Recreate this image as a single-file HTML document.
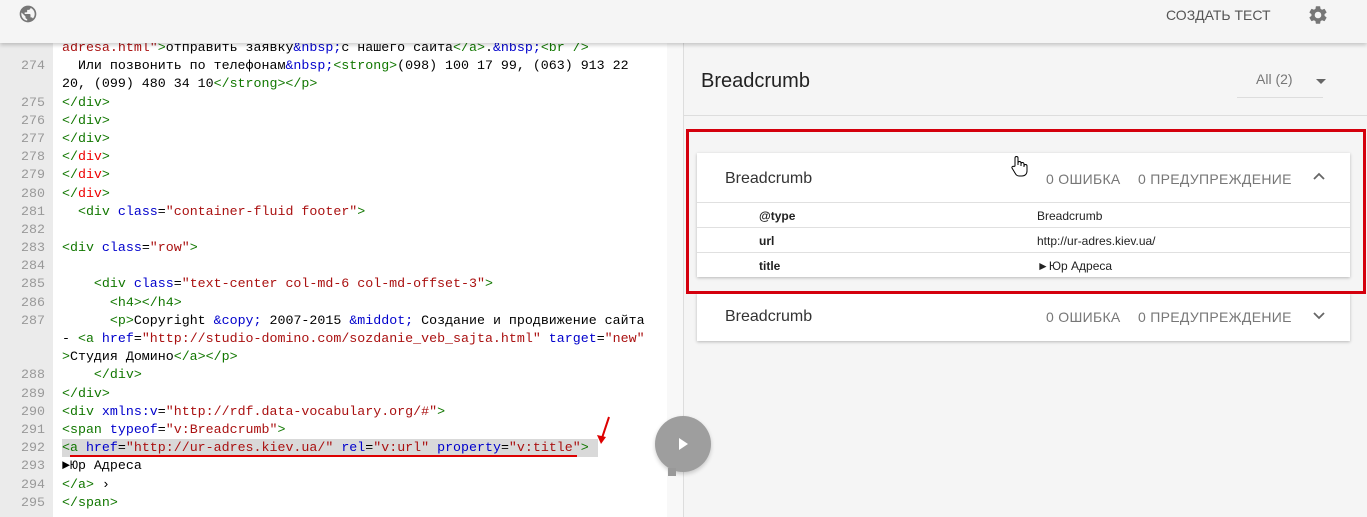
<!DOCTYPE html>
<html><head><meta charset="utf-8"><style>
*{margin:0;padding:0;box-sizing:border-box}
html,body{width:1367px;height:517px;overflow:hidden}
body{background:#f5f5f5;font-family:"Liberation Sans",sans-serif;position:relative}
.hdr{position:absolute;left:0;top:0;width:1367px;height:43px;background:#f5f5f5;box-shadow:0 2px 4px rgba(0,0,0,.2);z-index:5}
.left{position:absolute;left:0;top:43px;width:683px;height:474px;background:#fff;overflow:hidden}
.gut{position:absolute;left:0;top:0;width:53px;height:474px;background:#ebebeb}
.sb{position:absolute;left:667px;top:0;width:16px;height:474px;background:#f8f8f8}
.code{position:absolute;left:0;top:-4px;width:667px;font-family:"Liberation Mono","DejaVu Sans Mono",monospace;font-size:13.3px;line-height:18.2px;color:#000}
.r{height:18.2px;position:relative}
.n{position:absolute;left:0;width:45px;text-align:right;color:#999}
.t{position:absolute;left:62px;white-space:pre}
.g{color:#170}.b{color:#00c}.s{color:#a11}.rd{color:#e00}
.right{position:absolute;left:683px;top:43px;width:684px;height:474px;background:#f5f5f5;border-left:1px solid #ddd}
.card{position:absolute;left:697px;width:653px;background:#fff;box-shadow:0 1px 3px rgba(0,0,0,.25)}
.ch{height:49px;position:relative;font-size:16px;color:#333}
.ch .nm{position:absolute;left:28px;top:17px}
.ch .st{position:absolute;left:349px;top:18px;font-size:14px;color:#777;letter-spacing:.3px}
.ch .st2{position:absolute;left:441px;top:18px;font-size:14px;color:#777;letter-spacing:.3px}
.row{height:25px;border-top:1px solid #e0e0e0;font-size:12px;color:#222;position:relative}
.row .k{position:absolute;left:62px;top:6px;font-weight:bold}
.row .v{position:absolute;left:340px;top:6px}
</style></head><body>
<div class="hdr">
<svg style="position:absolute;left:18px;top:4px" width="20" height="20" viewBox="0 0 24 24"><path fill="#777" d="M12 2C6.48 2 2 6.480 2 12s4.48 10 10 10 10-4.48 10-10S17.52 2 12 2zm-1 17.93c-3.95-.49-7-3.850-7-7.930 0-.62.08-1.21.21-1.79L9 15v1c0 1.1.9 2 2 2v1.93zm6.9-2.54c-.26-.81-1-1.39-1.9-1.39h-1v-3c0-.55-.45-1-1-1H8v-2h2c.55 0 1-.45 1-1V7h2c1.1 0 2-.9 2-2v-.41c2.93 1.19 5 4.06 5 7.41 0 2.08-.8 3.97-2.1 5.39z"/></svg>
<div style="position:absolute;left:1166px;top:7px;font-size:14px;color:#555">СОЗДАТЬ ТЕСТ</div>
<svg style="position:absolute;left:1307px;top:4px" width="22" height="22" viewBox="0 0 24 24"><path fill="#777" d="M19.14 12.94c.04-.3.06-.61.06-.94s-.02-.64-.07-.94l2.03-1.58a.49.49 0 00.12-.61l-1.92-3.32a.49.49 0 00-.59-.22l-2.39.96c-.5-.38-1.03-.7-1.62-.94l-.36-2.54a.48.48 0 00-.48-.41h-3.84c-.24 0-.43.17-.47.41l-.36 2.54c-.59.24-1.130.57-1.62.94l-2.39-.96a.48.48 0 00-.59.22L2.74 8.87c-.12.21-.08.47.12.61l2.03 1.58c-.05.3-.09.63-.09.94s.02.64.07.94l-2.03 1.58a.49.49 0 00-.12.61l1.92 3.32c.12.22.37.29.59.22l2.39-.96c.5.38 1.03.7 1.62.94l.36 2.54c.05.24.24.41.48.41h3.84c.24 0 .44-.17.47-.41l.36-2.54c.59-.24 1.13-.56 1.62-.94l2.39.96c.22.08.47 0 .59-.22l1.92-3.32c.12-.22.07-.47-.12-.61l-2.01-1.58zM12 15.6A3.6 3.6 0 1112 8.4a3.6 3.6 0 010 7.2z"/></svg>
</div>
<div class="left"><div class="gut"></div><div class="sb"></div>
<div class="code"><div class="r"><span class="t"><span class="s">adresa.html"</span><span class="g">&gt;</span>отправить заявку<span class="b">&amp;nbsp;</span>с нашего сайта<span class="g">&lt;/a&gt;</span>.<span class="b">&amp;nbsp;</span><span class="g">&lt;br /&gt;</span></span></div><div class="r"><span class="n">274</span><span class="t">  Или позвонить по телефонам<span class="b">&amp;nbsp;</span><span class="g">&lt;strong&gt;</span>(098) 100 17 99, (063) 913 22</span></div><div class="r"><span class="t">20, (099) 480 34 10<span class="g">&lt;/strong&gt;&lt;/p&gt;</span></span></div><div class="r"><span class="n">275</span><span class="t g">&lt;/div&gt;</span></div><div class="r"><span class="n">276</span><span class="t g">&lt;/div&gt;</span></div><div class="r"><span class="n">277</span><span class="t g">&lt;/div&gt;</span></div><div class="r"><span class="n">278</span><span class="t"><span class="g">&lt;/</span><span class="rd">div</span><span class="g">&gt;</span></span></div><div class="r"><span class="n">279</span><span class="t"><span class="g">&lt;/</span><span class="rd">div</span><span class="g">&gt;</span></span></div><div class="r"><span class="n">280</span><span class="t"><span class="g">&lt;/</span><span class="rd">div</span><span class="g">&gt;</span></span></div><div class="r"><span class="n">281</span><span class="t">  <span class="g">&lt;div</span> <span class="b">class</span>=<span class="s">"container-fluid footer"</span><span class="g">&gt;</span></span></div><div class="r"><span class="n">282</span></div><div class="r"><span class="n">283</span><span class="t"><span class="g">&lt;div</span> <span class="b">class</span>=<span class="s">"row"</span><span class="g">&gt;</span></span></div><div class="r"><span class="n">284</span></div><div class="r"><span class="n">285</span><span class="t">    <span class="g">&lt;div</span> <span class="b">class</span>=<span class="s">"text-center col-md-6 col-md-offset-3"</span><span class="g">&gt;</span></span></div><div class="r"><span class="n">286</span><span class="t g">      &lt;h4&gt;&lt;/h4&gt;</span></div><div class="r"><span class="n">287</span><span class="t">      <span class="g">&lt;p&gt;</span>Copyright <span class="b">&amp;copy;</span> 2007-2015 <span class="b">&amp;middot;</span> Создание и продвижение сайта</span></div><div class="r"><span class="t">- <span class="g">&lt;a</span> <span class="b">href</span>=<span class="s">"http://studio-domino.com/sozdanie_veb_sajta.html"</span> <span class="b">target</span>=<span class="s">"new"</span></span></div><div class="r"><span class="t"><span class="g">&gt;</span>Студия Домино<span class="g">&lt;/a&gt;&lt;/p&gt;</span></span></div><div class="r"><span class="n">288</span><span class="t g">    &lt;/div&gt;</span></div><div class="r"><span class="n">289</span><span class="t g">&lt;/div&gt;</span></div><div class="r"><span class="n">290</span><span class="t"><span class="g">&lt;div</span> <span class="b">xmlns:v</span>=<span class="s">"http://rdf.data-vocabulary.org/#"</span><span class="g">&gt;</span></span></div><div class="r"><span class="n">291</span><span class="t"><span class="g">&lt;span</span> <span class="b">typeof</span>=<span class="s">"v:Breadcrumb"</span><span class="g">&gt;</span></span></div><div class="r"><span class="n">292</span><span class="t" style="background:#d9d9d9;width:536px"><span class="g">&lt;a</span> <span class="b">href</span>=<span class="s">"http://ur-adres.kiev.ua/"</span> <span class="b">rel</span>=<span class="s">"v:url"</span> <span class="b">property</span>=<span class="s">"v:title"</span><span class="g">&gt;</span></span></div><div class="r"><span class="n">293</span><span class="t">►Юр Адреса</span></div><div class="r"><span class="n">294</span><span class="t"><span class="g">&lt;/a&gt;</span> ›</span></div><div class="r"><span class="n">295</span><span class="t g">&lt;/span&gt;</span></div></div>
<div style="position:absolute;left:70px;top:412px;width:507px;height:2px;background:#d00"></div>
<svg style="position:absolute;left:596px;top:372px" width="16" height="32"><path d="M13 2 L5 26" stroke="#d00" stroke-width="2"/><path d="M1 20 L5 29 L10 22Z" fill="#d00"/></svg>
</div>
<div class="right">
<div style="position:absolute;left:17px;top:27px;font-size:20px;color:#222">Breadcrumb</div>
<div style="position:absolute;left:572px;top:28px;font-size:14px;color:#777">All (2)</div>
<div style="position:absolute;left:632px;top:36px;width:0;height:0;border-left:5px solid transparent;border-right:5px solid transparent;border-top:5px solid #666"></div>
<div style="position:absolute;left:553px;top:54px;width:86px;height:1px;background:#ddd"></div>
<div style="position:absolute;left:0;top:72px;width:684px;height:1px;background:#ddd"></div>
</div>
<div class="card" style="top:153px"><div class="ch"><span class="nm">Breadcrumb</span><span class="st">0 ОШИБКА</span><span class="st2">0 ПРЕДУПРЕЖДЕНИЕ</span>
<svg style="position:absolute;left:616px;top:19px" width="12" height="8"><path d="M1 7 L6 2 L11 7" stroke="#666" stroke-width="1.8" fill="none"/></svg></div>
<div class="row"><span class="k">@type</span><span class="v">Breadcrumb</span></div>
<div class="row"><span class="k">url</span><span class="v">http://ur-adres.kiev.ua/</span></div>
<div class="row"><span class="k">title</span><span class="v">►Юр Адреса</span></div></div>
<div class="card" style="top:293px;height:48px"><div class="ch"><span class="nm" style="top:15px">Breadcrumb</span><span class="st" style="top:16px">0 ОШИБКА</span><span class="st2" style="top:16px">0 ПРЕДУПРЕЖДЕНИЕ</span>
<svg style="position:absolute;left:616px;top:19px" width="12" height="8"><path d="M1 1 L6 6 L11 1" stroke="#666" stroke-width="1.8" fill="none"/></svg></div></div>
<div style="position:absolute;left:686px;top:129px;width:680px;height:165px;border:3px solid #d4000d"></div>
<div style="position:absolute;left:655px;top:416px;width:56px;height:56px;border-radius:50%;background:#9e9e9e;box-shadow:0 2px 4px rgba(0,0,0,.2)"></div>
<div style="position:absolute;left:679px;top:438px;width:0;height:0;border-top:6px solid transparent;border-bottom:6px solid transparent;border-left:9px solid #fff"></div>
<div style="position:absolute;left:668px;top:468px;width:8px;height:8px;background:#999"></div>
<svg style="position:absolute;left:1010px;top:155px" width="18" height="22" viewBox="0 0 18 22"><path d="M5 11V3a1.5 1.5 0 013 0v7V8a1.5 1.5 0 013 0v3V9a1.5 1.5 0 013 0v3-1a1.5 1.5 0 013 0v5c0 3-2 5-5 5H9c-2 0-3-1-4-3l-3-5a1.3 1.3 0 012-1.5z" fill="#fff" stroke="#000" stroke-width="1"/></svg>
</body></html>
